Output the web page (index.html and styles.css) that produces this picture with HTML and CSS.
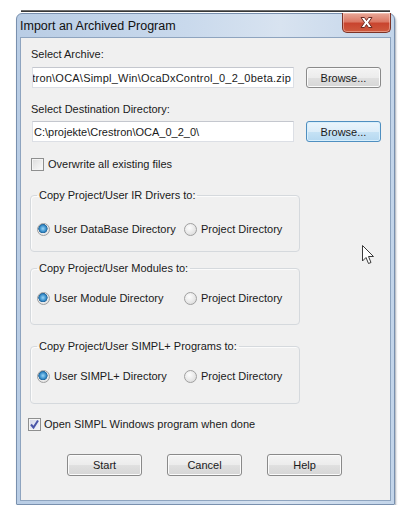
FILE: index.html
```html
<!DOCTYPE html>
<html>
<head>
<meta charset="utf-8">
<link rel="stylesheet" href="styles.css">
</head>
<body>
<div class="topline"></div>
<div class="window">
  <div class="titlebar">
    <span class="title">Import an Archived Program</span>
    <span class="close">
      <svg width="47" height="19" viewBox="0 0 47 19">
        <path d="M18 4.5 L21.5 4.5 L23.5 7.5 L25.5 4.5 L29 4.5 L25.5 9.5 L29 14.5 L25.5 14.5 L23.5 11.5 L21.5 14.5 L18 14.5 L21.5 9.5 Z" fill="#ffffff" stroke="#6b2a22" stroke-width="1" stroke-linejoin="round"/>
      </svg>
    </span>
  </div>
  <div class="client">
    <div class="label">Select Archive:</div>
    <div class="row">
      <div class="input input-end"><span>C:\projekte\Crestron\OCA\Simpl_Win\OcaDxControl_0_2_0beta.zip</span></div>
      <div class="btn">Browse...</div>
    </div>
    <div class="label label-dest">Select Destination Directory:</div>
    <div class="row row-dest">
      <div class="input"><span>C:\projekte\Crestron\OCA_0_2_0\</span></div>
      <div class="btn btn-default">Browse...</div>
    </div>
    <div class="check check-overwrite"><span class="box"></span>Overwrite all existing files</div>

    <fieldset class="group g1">
      <legend>Copy Project/User IR Drivers to:</legend>
      <div class="radios">
        <span class="opt"><span class="radio on"></span>User DataBase Directory</span>
        <span class="opt"><span class="radio"></span>Project Directory</span>
      </div>
    </fieldset>

    <fieldset class="group g2">
      <legend>Copy Project/User Modules to:</legend>
      <div class="radios">
        <span class="opt"><span class="radio on"></span>User Module Directory</span>
        <span class="opt"><span class="radio"></span>Project Directory</span>
      </div>
    </fieldset>

    <fieldset class="group g3">
      <legend>Copy Project/User SIMPL+ Programs to:</legend>
      <div class="radios">
        <span class="opt"><span class="radio on"></span>User SIMPL+ Directory</span>
        <span class="opt"><span class="radio"></span>Project Directory</span>
      </div>
    </fieldset>

    <div class="check check-open"><span class="box checked">
      <svg width="11" height="11" viewBox="0 0 11 11"><path d="M2 5.5 L4.5 8.5 L9 1.5" fill="none" stroke="#4a55a8" stroke-width="2"/></svg>
    </span>Open SIMPL Windows program when done</div>

    <div class="buttons">
      <div class="btn btn-wide">Start</div>
      <div class="btn btn-wide">Cancel</div>
      <div class="btn btn-wide">Help</div>
    </div>
  </div>
  <svg class="cursor" width="14" height="21" viewBox="0 0 14 21">
    <path d="M1.5 1.5 L1.5 17 L5 13.5 L7.5 19.5 L10 18.5 L7.5 12.5 L12.5 12.5 Z" fill="#ffffff" stroke="#3a3a3a" stroke-width="1" stroke-linejoin="round"/>
  </svg>
</div>
</body>
</html>
```

FILE: styles.css
```css
html, body {
  margin: 0;
  padding: 0;
  background: #ffffff;
}

body {
  font-family: "Liberation Sans", Arial, sans-serif;
  font-size: 11px;
  color: #1a1a1a;
}

.topline {
  margin: 10px 0 0 21px;
  width: 369px;
  height: 2px;
  background: linear-gradient(#8a8a8a, #1c1c1c);
}

.window {
  position: relative;
  margin: 1px 0 0 16px;
  width: 371px;
  padding: 0 3px 3px 3px;
  border: 1px solid #7990ae;
  border-radius: 6px 6px 1px 1px;
  background: linear-gradient(to right, #b9cde5, #c9d9ec 45%, #d8e3f0 70%, #c3d5ea);
  box-shadow: 1px 2px 2px rgba(60, 70, 90, 0.45);
}

.titlebar {
  height: 23px;
  display: flex;
  align-items: center;
  justify-content: space-between;
}

.title {
  font-size: 12.5px;
  color: #101010;
}

.close {
  align-self: flex-start;
  margin-top: -1px;
  width: 47px;
  height: 19px;
  border: 1px solid #7d3326;
  border-top: none;
  border-radius: 0 0 5px 5px;
  background: linear-gradient(#e9a999 0%, #dc7a66 45%, #c9452f 55%, #cf5a3e 100%);
  box-shadow: inset 0 0 0 1px rgba(255, 220, 210, 0.45);
  display: flex;
}

.client {
  background: #f0f0f0;
  border: 1px solid #8ea4bf;
  padding: 10px 0 24px 10px;
}

.label {
  line-height: 13px;
  height: 13px;
}

.label-dest {
  margin-top: 15px;
}

.row {
  display: flex;
  align-items: center;
  margin-top: 6px;
}

.row-dest {
  margin-top: 5px;
}

.input {
  margin-left: 1px;
  width: 259px;
  height: 19px;
  border: 1px solid #dcdfe5;
  border-top-color: #c4c7ce;
  background: #ffffff;
  display: flex;
  justify-content: flex-start;
  align-items: center;
  overflow: hidden;
  white-space: nowrap;
  padding-left: 1px;
}

.input-end {
  justify-content: flex-end;
  padding-right: 2px;
  width: 258px;
  padding-left: 0;
  letter-spacing: 0.22px;
}

.btn {
  box-sizing: border-box;
  margin-left: 12px;
  width: 75px;
  height: 21px;
  border: 1px solid #8a8a8a;
  border-radius: 3px;
  background: linear-gradient(#f4f4f4 0%, #ececec 50%, #e0e0e0 51%, #d6d6d6 100%);
  box-shadow: inset 0 0 0 1px #fbfbfb;
  display: flex;
  align-items: center;
  justify-content: center;
  color: #1a1a1a;
}

.btn-default {
  border-color: #4f8fc0;
  background: linear-gradient(#eaf5fc 0%, #dcedf9 50%, #c6e2f5 51%, #b5d8f0 100%);
  box-shadow: inset 0 0 0 1px #d8effc;
}

.check {
  display: flex;
  align-items: center;
  height: 13px;
  line-height: 13px;
  gap: 4px;
}

.check-overwrite {
  margin-top: 16px;
}

.check-open {
  margin-top: 14px;
  margin-left: -3px;
  gap: 3px;
}

.box {
  box-sizing: border-box;
  width: 13px;
  height: 13px;
  border: 1px solid #8e8f8f;
  background: linear-gradient(135deg, #dcdcdc, #fbfbfb);
  box-shadow: inset 0 0 0 1px #f4f4f4;
  display: flex;
  align-items: center;
  justify-content: center;
}

.box.checked {
  background: linear-gradient(135deg, #d2d6e8, #f6f7fc);
}

.group {
  margin: 0 0 0 -1px;
  width: 262px;
  border: 1px solid #d5d9dd;
  border-radius: 4px;
  box-shadow: inset 1px 1px 0 #fbfbfb;
  padding: 20px 0 15px 6px;
}

.group legend {
  padding: 0 2px;
  line-height: 13px;
}

.g1 {
  margin-top: 18px;
}

.g2 {
  margin-top: 10px;
  padding-top: 16px;
  padding-bottom: 19px;
}

.g3 {
  margin-top: 15px;
  padding-top: 16px;
  padding-bottom: 20px;
}

.radios {
  display: grid;
  grid-template-columns: 147px auto;
  height: 14px;
  align-items: center;
}

.opt {
  display: flex;
  align-items: center;
  gap: 4px;
  white-space: nowrap;
}

.radio {
  box-sizing: border-box;
  width: 13px;
  height: 13px;
  border-radius: 50%;
  border: 1px solid #a0a0a0;
  background: radial-gradient(circle at 40% 35%, #fdfdfd 0%, #e6e6e6 60%, #d2d2d2 100%);
}

.radio.on {
  background:
    radial-gradient(circle at 45% 42%, #9ad6f7 0%, #3a8fcb 35%, #1f6399 50%, transparent 55%),
    radial-gradient(circle at 40% 35%, #fdfdfd 0%, #e6e6e6 70%, #d2d2d2 100%);
}

.buttons {
  display: flex;
  gap: 25px;
  margin-top: 23px;
  padding-left: 36px;
}

.btn-wide {
  margin-left: 0;
  height: 22px;
}

.cursor {
  position: absolute;
  left: 344px;
  top: 230px;
}
```
